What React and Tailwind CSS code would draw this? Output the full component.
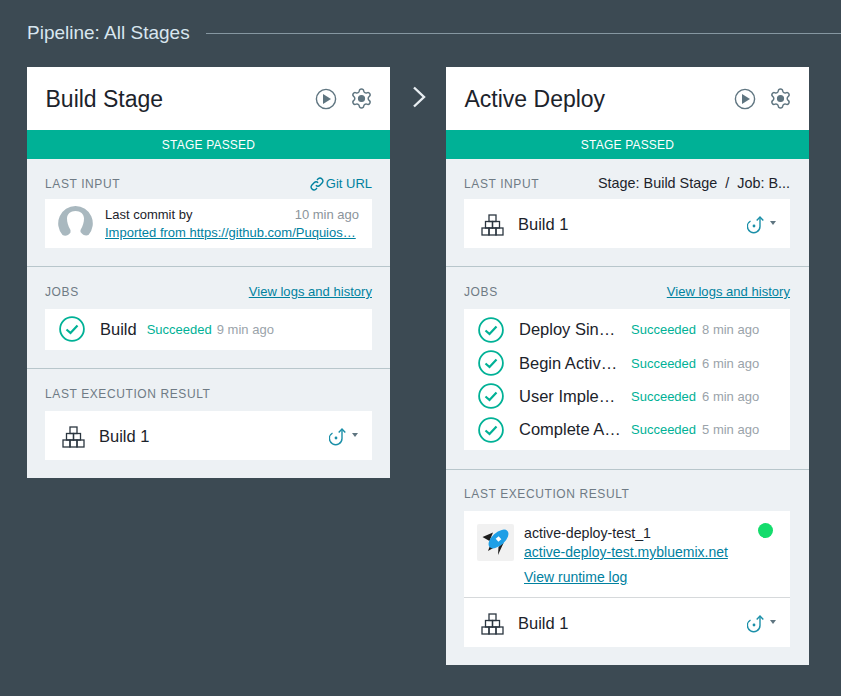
import React from 'react';
import { Settings } from 'lucide-react';

const PlayIcon = () => (
  <svg width="22" height="22" viewBox="0 0 22 22" fill="none">
    <circle cx="11" cy="11" r="9.6" stroke="#5f7580" strokeWidth="1.4" />
    <path d="M8 6 L16 11 L8 16 Z" fill="#5f7580" />
  </svg>
);

const GearIcon = () => (
  <Settings size={23} color="#5f7580" strokeWidth={1.5} className="[&_circle]:fill-[#5f7580]" />
);

const CheckIcon = () => (
  <svg width="26" height="26" viewBox="0 0 26 26" fill="none" stroke="#00b196" className="shrink-0">
    <circle cx="13" cy="13" r="11.9" strokeWidth="1.8" />
    <path d="M7.5 13.5 L11.5 17 L18.5 9.5" strokeWidth="2.2" />
  </svg>
);

const BlocksIcon = () => (
  <svg width="23" height="22" viewBox="0 0 23 22" fill="none" stroke="#2b3640" strokeWidth="1.3">
    <rect x="8" y="1" width="7" height="6.5" />
    <rect x="4.5" y="7.5" width="7" height="6.5" />
    <rect x="11.5" y="7.5" width="7" height="6.5" />
    <rect x="1" y="14" width="7" height="7" />
    <rect x="8" y="14" width="7" height="7" />
    <rect x="15" y="14" width="7" height="7" />
  </svg>
);

const DeployIcon = () => (
  <span className="flex items-center gap-[5px]">
    <svg width="18" height="20" viewBox="0 0 18 20" fill="none" stroke="#1a8fa8" strokeWidth="1.4">
      <path d="M3.5 6 A6.3 6.3 0 1 0 13 11.5 L13 2" />
      <path d="M9.7 5.5 L13 2 L16.3 5.5" />
      <circle cx="7" cy="11" r="1.4" fill="#1a8fa8" stroke="none" />
    </svg>
    <span className="w-0 h-0 border-x-[3.5px] border-x-transparent border-t-[4px] border-t-[#5f7580] mb-[4px]" />
  </span>
);

const RocketIcon = () => (
  <svg width="37" height="37" viewBox="0 0 37 37" className="rounded-[2px] bg-[#f1f1f1] shrink-0">
    <path d="M5.5 13 L16 8.5 L12.5 17 Z M11 27 L14 19 L18 23 Z M21 31 L21.5 23 L27 18 Z" fill="#1d1d1d" />
    <ellipse cx="21.5" cy="15" rx="12" ry="6.5" transform="rotate(-42 21.5 15)" fill="#1e9fe6" />
    <rect x="19.5" y="13" width="4" height="4" transform="rotate(-42 21.5 15)" fill="#fff" />
  </svg>
);

const Avatar = () => (
  <svg width="35" height="35" viewBox="0 0 35 35" className="shrink-0">
    <path d="M17.5 0 A17.5 17.5 0 0 0 4.5 29 C7 30.5 10 30 12.5 26.5 L12.5 24 C10 20 9 16 9 12.5 C9 8 12.5 5 17.5 5 C22.5 5 26 8 26 12.5 C26 16 25 20 22.5 24 L22.5 26 C25 29.5 28 30 30.5 29 A17.5 17.5 0 0 0 17.5 0 Z" fill="#a9b8bf" />
  </svg>
);

const SectionHead = ({ label, right, gap }) => (
  <div className={`flex items-center justify-between h-[16px] ${gap}`}>
    <span className="text-[12px] tracking-[0.6px] text-[#6f7b85] whitespace-nowrap">{label}</span>
    {right}
  </div>
);

const LogsLink = () => (
  <a className="text-[13px] tracking-[0.03px] text-[#00819f] underline">View logs and history</a>
);

const BuildRow = () => (
  <div className="flex items-center h-[49px] pt-[2px] pl-[17px] pr-[14px] bg-white">
    <BlocksIcon />
    <span className="ml-[14px] text-[16.5px] text-[#1c232b] flex-1">Build 1</span>
    <DeployIcon />
  </div>
);

const JobRow = ({ name, time, wide }) => (
  <div className="flex items-center h-[33.33px] pl-[14px]">
    <CheckIcon />
    <span className={`ml-[15px] text-[16.5px] text-[#1c232b] whitespace-nowrap ${wide ? 'w-[104px]' : ''}`}>{name}</span>
    <span className={`${wide ? 'ml-[8px]' : 'ml-[10px]'} pt-px text-[13px] text-[#00b196]`}>Succeeded</span>
    <span className={`${wide ? 'ml-[6px]' : 'ml-[5px]'} pt-px text-[13px] text-[#9aa3aa]`}>{time}</span>
  </div>
);

const Card = ({ title, children }) => (
  <div className="w-[363px] shrink-0 bg-[#edf1f4]">
    <div className="flex items-center justify-between h-[63px] pl-[18.5px] pr-[17px] bg-white">
      <h2 className="pt-[2px] text-[23px] text-[#1c232b]">{title}</h2>
      <div className="flex items-center gap-[13px]">
        <PlayIcon />
        <GearIcon />
      </div>
    </div>
    <div className="flex items-center justify-center h-[29px] bg-[#00b196] text-[12px] tracking-[0.2px] text-white">STAGE PASSED</div>
    {children}
  </div>
);

const Section = ({ children, last, className }) => (
  <div className={`pl-[18px] ${last ? '' : 'border-b border-[#b8c6cb]'} ${className}`}>{children}</div>
);

export default function App() {
  return (
    <div className="min-h-[696px] bg-[#3c4a53] font-['Liberation_Sans',sans-serif] overflow-hidden">
      <div className="flex items-center h-[67px] pl-[27px]">
        <span className="text-[19px] text-[#d8e6ef] whitespace-nowrap">Pipeline: All Stages</span>
        <span className="flex-1 ml-[16px] h-px bg-[#8697a1]" />
      </div>
      <div className="flex items-start pl-[27px]">
        <Card title="Build Stage">
          <Section className="h-[108px] pt-[17px] pr-[18px]">
            <SectionHead
              gap="mb-[7px]"
              label="LAST INPUT"
              right={
                <a className="flex items-center gap-[2px] text-[13px] text-[#00819f]">
                  <svg width="14" height="14" viewBox="0 0 24 24" fill="none" stroke="#00819f" strokeWidth="2.4">
                    <path d="M10 14a5 5 0 0 0 7 0l4-4a5 5 0 0 0-7-7l-2 2" />
                    <path d="M14 10a5 5 0 0 0-7 0l-4 4a5 5 0 0 0 7 7l2-2" />
                  </svg>
                  Git URL
                </a>
              }
            />
            <div className="flex items-center h-[49px] px-[13px] bg-white">
              <Avatar />
              <div className="ml-[12px] flex-1 min-w-0">
                <div className="flex justify-between text-[13px] leading-[16px] text-[#1c232b]">
                  <span>Last commit by</span>
                  <span className="text-[#8b949b]">10 min ago</span>
                </div>
                <a className="block mt-[2px] text-[13px] leading-[16px] text-[#00819f] underline whitespace-nowrap">Imported from https://github.com/Puquios…</a>
              </div>
            </div>
          </Section>
          <Section className="h-[102px] pt-[17px] pr-[18px]">
            <SectionHead gap="mb-[9px]" label="JOBS" right={<LogsLink />} />
            <div className="flex items-center h-[41px] bg-white">
              <JobRow name="Build" time="9 min ago" />
            </div>
          </Section>
          <Section last className="h-[109px] pt-[17px] pr-[18px]">
            <SectionHead gap="mb-[9px]" label="LAST EXECUTION RESULT" />
            <BuildRow />
          </Section>
        </Card>
        <div className="w-[56px] shrink-0 flex justify-center pl-[2px] pt-[19px]">
          <svg width="16" height="22" viewBox="0 0 16 22" fill="none" stroke="#e8eef2" strokeWidth="2.4">
            <path d="M3 1.5 L13 11 L3 20.5" />
          </svg>
        </div>
        <Card title="Active Deploy">
          <Section className="h-[108px] pt-[17px] pr-[19px]">
            <SectionHead
              gap="mb-[7px]"
              label="LAST INPUT"
              right={<span className="text-[14.4px] text-[#1c232b] whitespace-pre">Stage: Build Stage  /  Job: B...</span>}
            />
            <BuildRow />
          </Section>
          <Section className="h-[203px] pt-[17px] pr-[19px]">
            <SectionHead gap="mb-[9px]" label="JOBS" right={<LogsLink />} />
            <div className="pt-[4px] h-[141px] bg-white">
              <JobRow wide name="Deploy Sin…" time="8 min ago" />
              <JobRow wide name="Begin Activ…" time="6 min ago" />
              <JobRow wide name="User Imple…" time="6 min ago" />
              <JobRow wide name="Complete A…" time="5 min ago" />
            </div>
          </Section>
          <Section last className="h-[195px] pt-[16px] pr-[19px]">
            <SectionHead gap="mb-[9px]" label="LAST EXECUTION RESULT" />
            <div className="bg-white">
              <div className="flex h-[87px] pl-[13px] pr-[17px] pt-[13px] border-b border-[#d6d9db]">
                <RocketIcon />
                <div className="ml-[10px] pt-px flex-1">
                  <div className="text-[14.2px] leading-[16px] text-[#1c232b]">active-deploy-test_1</div>
                  <a className="block mt-[3px] text-[14px] leading-[16px] text-[#00819f] underline">active-deploy-test.mybluemix.net</a>
                  <a className="block mt-[9px] text-[14px] leading-[16px] text-[#00819f] underline">View runtime log</a>
                </div>
                <span className="w-[15px] h-[15px] -mt-[1px] rounded-full bg-[#14dc6c]" />
              </div>
              <BuildRow />
            </div>
          </Section>
        </Card>
      </div>
    </div>
  );
}
